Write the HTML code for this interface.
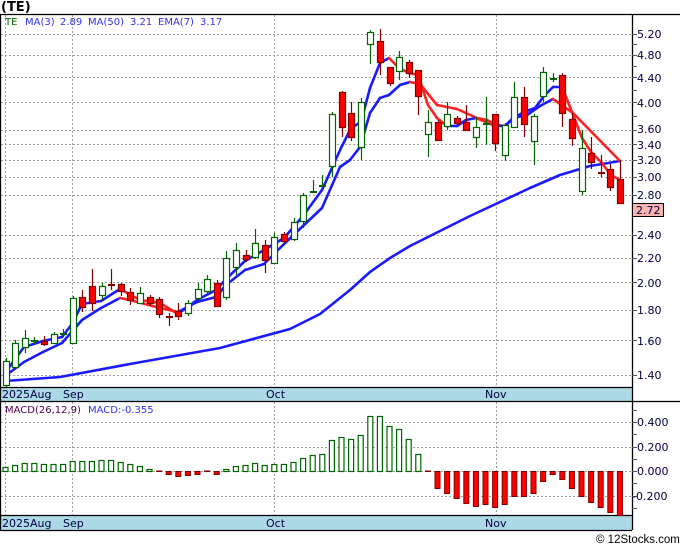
<!DOCTYPE html>
<html><head><meta charset="utf-8"><style>
html,body{margin:0;padding:0;background:#fff;}
body{width:680px;height:546px;overflow:hidden;position:relative;font-family:"DejaVu Sans","Liberation Sans",sans-serif;}
svg{position:absolute;left:0;top:0;}
</style></head><body>
<svg id="s" width="680" height="546" viewBox="0 0 680 546" xmlns="http://www.w3.org/2000/svg">
<rect x="0" y="0" width="680" height="546" fill="#fff"/>
<g id="grid" stroke="#a0a0a0" stroke-width="1" stroke-dasharray="2,2" fill="none"></g>
<rect x="0" y="387" width="632" height="14" fill="#add8e6"/>
<rect x="0" y="515" width="632" height="15" fill="#add8e6"/>
<g stroke="#000" stroke-width="1.3" fill="none">
<line x1="0" y1="14.5" x2="680" y2="14.5"/>
<line x1="0.5" y1="14" x2="0.5" y2="530"/>
<line x1="632.5" y1="14" x2="632.5" y2="530"/>
<line x1="0" y1="387.5" x2="632" y2="387.5"/>
<line x1="0" y1="401.5" x2="680" y2="401.5"/>
<line x1="0" y1="515.5" x2="632" y2="515.5"/>
<line x1="0" y1="530.5" x2="632" y2="530.5"/>
</g>
<g id="ticks" stroke="#555" stroke-width="1"></g>
<g id="bars"></g>
<g id="lines" fill="none" stroke-width="2.6" stroke-linejoin="round"></g>
<g id="candles"></g>
<g font-size="11" fill="#000040" font-family="DejaVu Sans, Liberation Sans, sans-serif">
<text x="637" y="38">5.20</text>
<text x="637" y="59">4.80</text>
<text x="637" y="82">4.40</text>
<text x="637" y="107">4.00</text>
<text x="637" y="133">3.60</text>
<text x="637" y="149">3.40</text>
<text x="637" y="164">3.20</text>
<text x="637" y="181">3.00</text>
<text x="637" y="199">2.80</text>
<text x="637" y="239">2.40</text>
<text x="637" y="262">2.20</text>
<text x="637" y="287">2.00</text>
<text x="637" y="314">1.80</text>
<text x="637" y="345">1.60</text>
<text x="637" y="379">1.40</text>
<text x="637" y="426">0.400</text>
<text x="637" y="451">0.200</text>
<text x="637" y="475">0.000</text>
<text x="632" y="500">-0.200</text>
<text x="2" y="398">2025Aug</text>
<text x="63" y="398">Sep</text>
<text x="266" y="398">Oct</text>
<text x="485" y="398">Nov</text>
<text x="2" y="527">2025Aug</text>
<text x="63" y="527">Sep</text>
<text x="266" y="527">Oct</text>
<text x="485" y="527">Nov</text>
</g>
<rect x="632.5" y="203.5" width="31" height="13" fill="#f7b4b0" stroke="#000" stroke-width="1"/>
<text x="636" y="214" font-size="11" fill="#000040">2.72</text>
<text x="1" y="11" font-size="13" font-weight="bold" fill="#000">(TE)</text>
<g font-size="10" fill="#3333ee">
<text x="5" y="25" fill="#006400">TE</text>
<text x="25" y="25">MA(3)</text>
<text x="60" y="25">2.89</text>
<text x="88" y="25">MA(50)</text>
<text x="130" y="25">3.21</text>
<text x="158" y="25">EMA(7)</text>
<text x="200" y="25">3.17</text>
<text x="5" y="413" fill="#500050">MACD(26,12,9)</text>
<text x="88" y="413">MACD:-0.355</text>
</g>
<text x="596" y="543" font-size="11.5" fill="#000" font-family="Liberation Sans, sans-serif">© 12Stocks.com</text>
</svg>
<script>
var NS="http://www.w3.org/2000/svg";
function el(p,t,a){var e=document.createElementNS(NS,t);for(var k in a)e.setAttribute(k,a[k]);document.getElementById(p).appendChild(e);return e;}
function py(p){return 34+(Math.log(5.2)-Math.log(p))*259.9;}
var lv=[5.2,4.8,4.4,4.0,3.6,3.4,3.2,3.0,2.8,2.4,2.2,2.0,1.8,1.6,1.4];
lv.forEach(function(p){var y=Math.round(py(p))+0.5;el("grid","line",{x1:1,x2:632,y1:y,y2:y});});
[422,447,471,496].forEach(function(y){el("grid","line",{x1:1,x2:632,y1:y+0.5,y2:y+0.5});});
[5.5,72.5,274.5,496.5].forEach(function(x){el("grid","line",{x1:x,x2:x,y1:15,y2:387});el("grid","line",{x1:x,x2:x,y1:402,y2:515});});
for(var p=1.4;p<=5.21;p+=0.2){var y=Math.round(py(p))+0.5;el("ticks","line",{x1:632,x2:637,y1:y,y2:y});}
for(var v=-0.3;v<=0.55;v+=0.1){var y=Math.round(471-v*122.5)+0.5;el("ticks","line",{x1:632,x2:637,y1:y,y2:y});}
function X(i){return 5.5+i*9.6;}
var m=[467,465,463,463,464,464,464,461,461,461,460,460,462,464,466,469,471,474,476,475,474,472,474,469,466,465,463,465,464,464,462,458,455,454,440,437,439,435,416,416,426,429,439,454,471,488,493,498,503,506,504,507,504,496,496,493,481,474,479,488,496,502,507,512,515];
m.forEach(function(v,i){var x=X(i)-3;
 if(v<470){el("bars","rect",{x:x+0.5,y:v+0.5,width:5,height:471-v,fill:"#fff",stroke:"#006400","stroke-width":1.2});}
 else if(v<=472){el("bars","rect",{x:x,y:470.5,width:6,height:1.5,fill:"#800000"});}
 else{el("bars","rect",{x:x+0.5,y:471.5,width:5,height:v-471,fill:"#ff0000",stroke:"#800000","stroke-width":1});}
});
function poly(pts,col){el("lines","polyline",{points:pts,stroke:col});}
poly("5,381 60,377 130,364 220,348 290,329 320,314 335,302 350,290 370,272 390,258 410,246 440,231 470,216 500,202 530,188 560,175 590,166 620,161","#1a1aff");
function colored(a){for(var i=0;i<a.length-2;i+=2){var c=(a[i+3]>a[i+1]+0.5)?"#ff2020":"#1a1aff";el("lines","line",{x1:a[i],y1:a[i+1],x2:a[i+2],y2:a[i+3],stroke:c,"stroke-linecap":"round"});}}
colored([5,376,24,362,43,352,62,343,82,320,101,308,120,298,130,300,160,308,178,312,197,302,216,297,226,285,245,270,264,264,284,244,303,226,322,208,340,167,350,160,360,147,370,113,380,98,389,95,400,85,410,82,420,84,437,105,457,109,477,118,487,120,497,125,505,126,513,118,527,115,540,106,553,99,573,113,620,161]);
colored([5,373,24,347,43,341,62,337,72,324,82,304,101,301,120,289,140,300,160,303,178,314,197,300,216,290,226,279,245,261,264,250,284,238,303,216,322,190,341,148,351,128,361,122,370,88,380,63,389,58,399,68,409,73,418,75,428,105,437,118,447,126,457,126,466,120,476,118,486,122,495,126,505,126,514,118,524,112,535,108,544,96,553,87,562,87,572,112,582,138,591,152,601,162,611,175,620,180]);
var c=[[361,385,358,387,1],[343,367,340,370,1],[338,347,330,353,1],[340,341,337,344,1],[341,344,336,346,0],[334,343,332,344,1],[333,334,329,337,1],[298,343,296,344,1],[297,307,290,312,0],[286,303,269,311,0],[286,295,283,300,1],[284,285,269,290,0],[284,291,283,296,0],[292,300,288,305,0],[293,303,287,304,1],[297,303,295,306,0],[299,314,297,318,0],[316,318,313,326,0],[311,316,303,320,0],[303,313,300,316,1],[289,298,283,300,1],[279,291,275,293,1],[283,306,280,307,0],[258,297,251,300,1],[250,267,243,275,1],[255,259,250,262,0],[243,257,229,259,1],[245,260,240,273,0],[237,263,233,264,1],[234,241,232,243,0],[222,239,218,241,1],[195,221,193,228,1],[191,192,180,193,1],[185,186,175,187,1],[114,166,112,177,1],[92,127,91,137,0],[113,137,102,141,0],[102,147,98,160,1],[32,44,30,64,1],[41,62,29,75,0],[67,83,67,86,0],[57,71,51,80,1],[62,73,60,78,0],[70,96,70,115,0],[122,134,110,157,1],[122,140,120,141,0],[114,126,102,130,1],[118,123,116,125,0],[122,130,105,131,0],[127,137,117,148,1],[123,124,97,145,1],[114,143,114,151,0],[125,155,123,161,1],[97,127,82,128,1],[97,124,87,137,0],[116,141,114,165,1],[72,96,67,102,1],[78,79,73,82,1],[75,113,73,127,0],[119,138,113,146,0],[148,191,130,195,1],[153,162,137,169,0],[172,173,155,177,0],[169,187,164,191,0],[179,203,160,203,0]];
c.forEach(function(d,i){var x=Math.round(X(i))+0.5;var g=d[4]==1;var sc=g?"#006400":"#800000";
 el("candles","line",{x1:x,x2:x,y1:d[2],y2:d[3],stroke:sc,"stroke-width":1.2});
 var h=Math.max(d[1]-d[0],1);
 if(h<=2){el("candles","rect",{x:x-3.5,y:d[0],width:7,height:2,fill:sc});}
 else el("candles","rect",{x:x-3,y:d[0]+0.5,width:6,height:h,fill:g?"#fff":"#ff0000",stroke:sc,"stroke-width":1.2});
});
</script>
</body></html>
